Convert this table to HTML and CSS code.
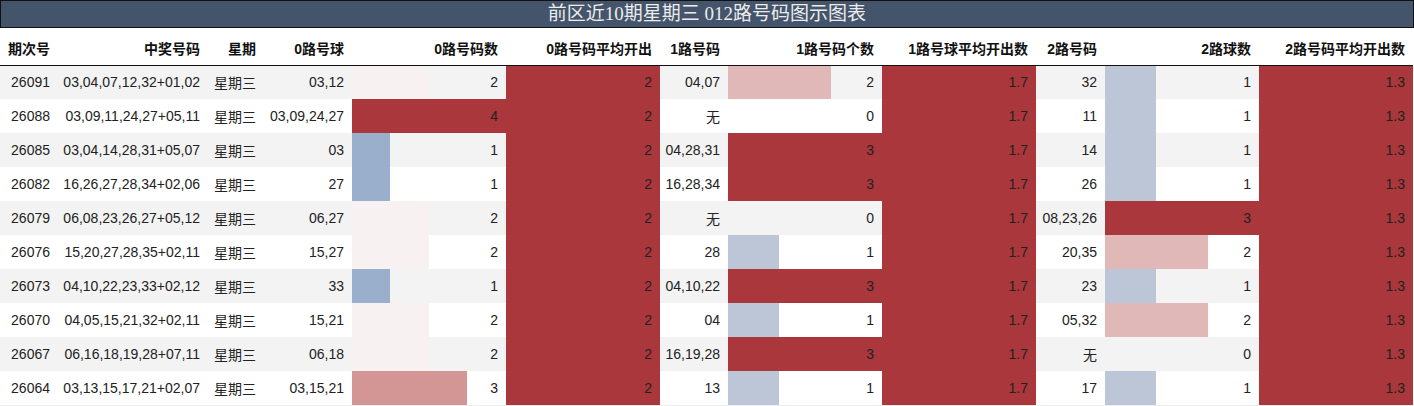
FILE: index.html
```html
<!DOCTYPE html>
<html lang="zh">
<head>
<meta charset="utf-8">
<title>前区近10期星期三 012路号码图示图表</title>
<link rel="stylesheet" href="styles.css">
</head>
<body>
<div class="chart">
  <div class="title">前区近10期星期三 012路号码图示图表</div>
  <table class="grid">
    <colgroup>
      <col class="c-issue"><col class="c-win"><col class="c-week"><col class="c-r0">
      <col class="c-bar"><col class="c-bar"><col class="c-r1"><col class="c-bar">
      <col class="c-bar"><col class="c-r2"><col class="c-bar"><col class="c-last">
    </colgroup>
    <thead>
      <tr>
        <th>期次号</th><th>中奖号码</th><th>星期</th><th>0路号球</th><th>0路号码数</th><th>0路号码平均开出</th>
        <th>1路号码</th><th>1路号码个数</th><th>1路号球平均开出数</th><th>2路号码</th><th>2路球数</th><th>2路号码平均开出数</th>
      </tr>
    </thead>
    <tbody>
      <tr>
        <td>26091</td><td>03,04,07,12,32+01,02</td><td>星期三</td><td>03,12</td>
        <td class="bar z2" style="--w:50%">2</td><td class="bar full">2</td>
        <td>04,07</td><td class="bar o2" style="--w:66.67%">2</td><td class="bar full">1.7</td>
        <td>32</td><td class="bar o1" style="--w:33.33%">1</td><td class="bar full">1.3</td>
      </tr>
      <tr>
        <td>26088</td><td>03,09,11,24,27+05,11</td><td>星期三</td><td>03,09,24,27</td>
        <td class="bar full">4</td><td class="bar full">2</td>
        <td>无</td><td>0</td><td class="bar full">1.7</td>
        <td>11</td><td class="bar o1" style="--w:33.33%">1</td><td class="bar full">1.3</td>
      </tr>
      <tr>
        <td>26085</td><td>03,04,14,28,31+05,07</td><td>星期三</td><td>03</td>
        <td class="bar z1" style="--w:25%">1</td><td class="bar full">2</td>
        <td>04,28,31</td><td class="bar full">3</td><td class="bar full">1.7</td>
        <td>14</td><td class="bar o1" style="--w:33.33%">1</td><td class="bar full">1.3</td>
      </tr>
      <tr>
        <td>26082</td><td>16,26,27,28,34+02,06</td><td>星期三</td><td>27</td>
        <td class="bar z1" style="--w:25%">1</td><td class="bar full">2</td>
        <td>16,28,34</td><td class="bar full">3</td><td class="bar full">1.7</td>
        <td>26</td><td class="bar o1" style="--w:33.33%">1</td><td class="bar full">1.3</td>
      </tr>
      <tr>
        <td>26079</td><td>06,08,23,26,27+05,12</td><td>星期三</td><td>06,27</td>
        <td class="bar z2" style="--w:50%">2</td><td class="bar full">2</td>
        <td>无</td><td>0</td><td class="bar full">1.7</td>
        <td>08,23,26</td><td class="bar full">3</td><td class="bar full">1.3</td>
      </tr>
      <tr>
        <td>26076</td><td>15,20,27,28,35+02,11</td><td>星期三</td><td>15,27</td>
        <td class="bar z2" style="--w:50%">2</td><td class="bar full">2</td>
        <td>28</td><td class="bar o1" style="--w:33.33%">1</td><td class="bar full">1.7</td>
        <td>20,35</td><td class="bar o2" style="--w:66.67%">2</td><td class="bar full">1.3</td>
      </tr>
      <tr>
        <td>26073</td><td>04,10,22,23,33+02,12</td><td>星期三</td><td>33</td>
        <td class="bar z1" style="--w:25%">1</td><td class="bar full">2</td>
        <td>04,10,22</td><td class="bar full">3</td><td class="bar full">1.7</td>
        <td>23</td><td class="bar o1" style="--w:33.33%">1</td><td class="bar full">1.3</td>
      </tr>
      <tr>
        <td>26070</td><td>04,05,15,21,32+02,11</td><td>星期三</td><td>15,21</td>
        <td class="bar z2" style="--w:50%">2</td><td class="bar full">2</td>
        <td>04</td><td class="bar o1" style="--w:33.33%">1</td><td class="bar full">1.7</td>
        <td>05,32</td><td class="bar o2" style="--w:66.67%">2</td><td class="bar full">1.3</td>
      </tr>
      <tr>
        <td>26067</td><td>06,16,18,19,28+07,11</td><td>星期三</td><td>06,18</td>
        <td class="bar z2" style="--w:50%">2</td><td class="bar full">2</td>
        <td>16,19,28</td><td class="bar full">3</td><td class="bar full">1.7</td>
        <td>无</td><td>0</td><td class="bar full">1.3</td>
      </tr>
      <tr>
        <td>26064</td><td>03,13,15,17,21+02,07</td><td>星期三</td><td>03,15,21</td>
        <td class="bar z3" style="--w:75%">3</td><td class="bar full">2</td>
        <td>13</td><td class="bar o1" style="--w:33.33%">1</td><td class="bar full">1.7</td>
        <td>17</td><td class="bar o1" style="--w:33.33%">1</td><td class="bar full">1.3</td>
      </tr>
    </tbody>
  </table>
</div>
</body>
</html>
```

FILE: styles.css
```css
* { box-sizing: border-box; }

html, body {
  margin: 0;
  padding: 0;
  background: #ffffff;
}

body {
  font-family: "Liberation Sans", Arial, "Noto Sans CJK SC", sans-serif;
  font-size: 14px;
  color: #222222;
}

.chart {
  width: 1414px;
}

.title {
  height: 28px;
  background: #44546a;
  border: 1px solid #111111;
  color: #ececec;
  font-family: "Liberation Serif", "Noto Sans CJK SC", serif;
  font-size: 19px;
  line-height: 25px;
  text-align: center;
}

.grid {
  width: 1413px;
  table-layout: fixed;
  border-collapse: collapse;
  border-spacing: 0;
}

.c-issue { width: 58px; }
.c-win { width: 150px; }
.c-week { width: 56px; }
.c-r0 { width: 88px; }
.c-bar { width: 154px; }
.c-r1 { width: 68px; }
.c-r2 { width: 69px; }
.c-last { width: 154px; }

.grid th {
  height: 37px;
  padding: 3px 8px 0 0;
  font-weight: bold;
  font-size: 14px;
  color: #111111;
  text-align: right;
  white-space: nowrap;
  border-bottom: 1px solid #111111;
  background: #ffffff;
}

.grid td {
  height: 34px;
  padding: 0 8px 0 0;
  text-align: right;
  white-space: nowrap;
  vertical-align: middle;
}

.grid tbody tr:nth-child(odd) { background: #f3f3f3; }
.grid tbody tr:nth-child(even) { background: #ffffff; }
.grid tbody tr:last-child td { border-bottom: 1px solid #eeeeee; }

.bar {
  --w: 100%;
  --c: #a9373b;
  background-image: linear-gradient(to right, var(--c) 0, var(--c) var(--w), transparent var(--w), transparent 100%);
  background-repeat: no-repeat;
}

.bar.full { --c: #a9373b; --w: 100%; }
.bar.z1 { --c: #9aafcc; }
.bar.z2 { --c: #f8f1f1; }
.bar.z3 { --c: #d49694; }
.bar.o1 { --c: #bcc6d6; }
.bar.o2 { --c: #e0b8b8; }
```
